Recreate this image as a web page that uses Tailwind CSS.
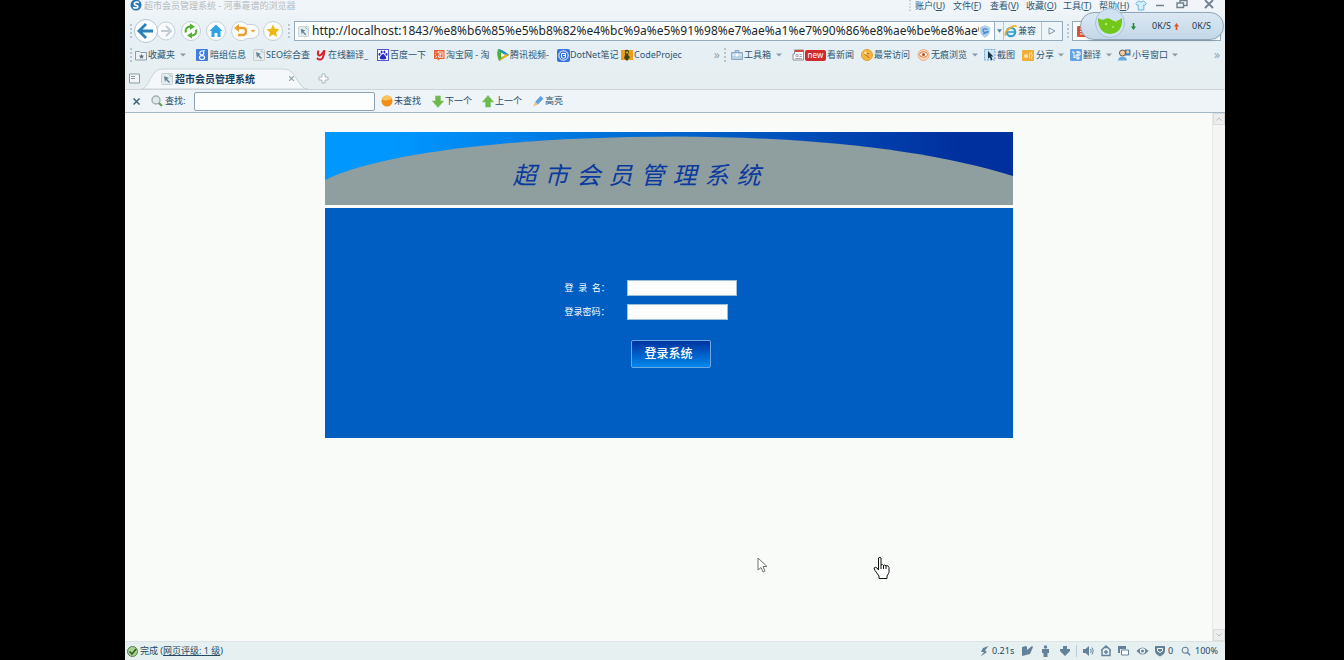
<!DOCTYPE html>
<html lang="zh-CN">
<head>
<meta charset="utf-8">
<title>超市会员管理系统</title>
<script src="https://cdn.jsdelivr.net/npm/@tailwindcss/browser@4"></script>
</head>
<body class="bg-black">
<svg class="hidden">
  <symbol id="page" viewBox="0 0 12 12"><rect x=".5" y=".5" width="11" height="11" rx="1" fill="#e6ecee" stroke="#c3ced3"/><path d="M3 3l5 2-2 1 3 3-1 1-3-3-1 2z" fill="#5f8496"/><path d="M8 1.500l2.500 2.500" stroke="#7fb58a"/></symbol>
  <symbol id="caret" viewBox="0 0 6 4"><path d="M0 .5h6L3 3.500z" fill="#8b9ba6"/></symbol>
  <symbol id="grip" viewBox="0 0 2 14"><path d="M1 0v14" stroke="#a9b8c2" stroke-width="1.500" stroke-dasharray="2 2"/></symbol>
  <symbol id="lens" viewBox="0 0 12 12"><circle cx="5" cy="5" r="3.600" fill="none" stroke="currentColor" stroke-width="1.300"/><path d="M8 8l3 3" stroke="currentColor" stroke-width="1.800"/></symbol>
</svg>
<div class="min-h-screen pl-[125px] pr-[119px] flex flex-col font-['Noto_Sans','Noto_Sans_CJK_SC',sans-serif] text-[9px] leading-3 text-[#2f5672] whitespace-nowrap">
<div class="relative flex-1 flex flex-col bg-[#f9fbf8] overflow-hidden">

<header class="bg-linear-to-b from-[#f2f6fa] from-0% via-[#e6f0f5] via-35% to-[#e7eced] to-100%">
  <div class="h-5 flex items-start px-1">
    <svg class="size-3 ml-px shrink-0" viewBox="0 0 12 12"><circle cx="6" cy="5" r="5.500" fill="#2876b4"/><path d="M9 2.500C5 1 2.500 4 6 5.200S8 9 3 7.500" fill="none" stroke="#fff" stroke-width="1.600"/></svg>
    <span class="ml-[2px] text-[#b3bcc2]">超市会员管理系统 - 河事靠谱的浏览器</span>
    <nav class="ml-auto flex items-start">
      <svg class="w-[2px] h-[11px] mr-1"><use href="#grip"/></svg>
      <button class="w-[38px] text-left">账户(<u>U</u>)</button>
      <button class="w-[37px] text-left">文件(<u>F</u>)</button>
      <button class="w-9 text-left">查看(<u>V</u>)</button>
      <button class="w-[37px] text-left">收藏(<u>O</u>)</button>
      <button class="w-9 text-left">工具(<u>T</u>)</button>
      <button class="w-9 text-left">帮助(<u>H</u>)</button>
      <button aria-label="皮肤" class="w-5"><svg class="w-3 h-[11px]" viewBox="0 0 12 11"><path d="M3.500 1L.7 3.500l1.500 2 1-.7V10h5.600V4.800l1 .7 1.500-2L8.500 1Q6 3 3.500 1z" fill="#d7effb" stroke="#6bb7e0"/></svg></button>
      <button aria-label="最小化" class="w-[21px]"><svg class="w-[10px] h-[11px]" viewBox="0 0 10 11"><path d="M1 5.500h8" stroke="#71818d" stroke-width="1.500"/></svg></button>
      <button aria-label="还原" class="w-7"><svg class="w-3 h-[9px]" viewBox="0 0 12 9"><path d="M4 3V.5h7v5H8M1 3h6.500v4.500H1z" fill="none" stroke="#71818d" stroke-width="1.400"/></svg></button>
      <button aria-label="关闭" class="w-[17px]"><svg class="size-[10px]" viewBox="0 0 10 10"><path d="M1 0l8 8M9 0L1 8" stroke="#71818d" stroke-width="1.800"/></svg></button>
    </nav>
  </div>

  <div class="h-[22px] flex items-center pl-[5px]">
    <svg class="w-[2px] h-[14px] shrink-0"><use href="#grip"/></svg>
    <button aria-label="后退" class="ml-px shrink-0"><svg class="w-11 h-[26px]" viewBox="0 0 44 26"><circle cx="33" cy="13" r="9" fill="#f7fafb" stroke="#c5d1d9"/><circle cx="13" cy="13" r="11.500" fill="#fafcfd" stroke="#b5c5cf"/><path d="M13 6l-7 7 7 7M6.500 13H20" fill="none" stroke="#2a7fb8" stroke-width="2.800"/><path d="M33 8l5 5-5 5M38 13H28" fill="none" stroke="#c2ccd3" stroke-width="1.800"/></svg></button>
    <button aria-label="刷新" class="ml-[3px] shrink-0"><svg class="size-[22px]" viewBox="0 0 22 22"><circle cx="11" cy="11" r="9.500" fill="#fafcfd" stroke="#c5d1d9"/><path d="M5.800 12.500Q5 6.800 10.500 6.300M16.200 9.500Q17 15.200 11.500 15.700" fill="none" stroke="#55b237" stroke-width="2.200"/><path d="M10 3.500l5 3.200-5 3zM12 12.300v6.200l-5-3z" fill="#55b237"/></svg></button>
    <button aria-label="主页" class="ml-[3px] shrink-0"><svg class="size-[22px]" viewBox="0 0 22 22"><circle cx="11" cy="11" r="9.500" fill="#fafcfd" stroke="#c5d1d9"/><path d="M11 4.500l6.500 6.500H15.500v6h-3v-4h-3v4h-3v-6H4.500z" fill="#2ca4e4"/></svg></button>
    <button aria-label="撤销" class="ml-[3px] shrink-0"><svg class="w-[30px] h-[22px]" viewBox="0 0 30 22"><path d="M11 1.500a9.500 9.500 0 1 0 6 17h5a7 7 0 0 0 0-14h-5q-3-3-6-3z" fill="#fafcfd" stroke="#c5d1d9"/><path d="M7 8h6q3 0 3 3.500T13 15H8" fill="none" stroke="#e9a12b" stroke-width="2.300"/><path d="M9 4v8L4 8z" fill="#e9a12b"/><path d="M20.500 10h5L23 12.500z" fill="#e9a12b"/></svg></button>
    <button aria-label="收藏" class="ml-[2px] shrink-0"><svg class="size-[22px]" viewBox="0 0 22 22"><circle cx="11" cy="11" r="9.500" fill="#fafcfd" stroke="#c5d1d9"/><path d="M11 4.500l1.900 4.200 4.600.5-3.400 3.100 1 4.600L11 14.600l-4.100 2.300 1-4.600L4.500 9.200l4.600-.5z" fill="#edb90f"/></svg></button>
    <svg class="ml-1 w-[2px] h-[14px] shrink-0"><use href="#grip"/></svg>
    <div class="ml-1 h-5 flex-1 min-w-0 flex items-center border border-[#93abbb] bg-[#fdfefe]">
      <svg class="size-[11px] ml-[3px] shrink-0"><use href="#page"/></svg>
      <input aria-label="地址" class="flex-1 min-w-0 pl-[3px] text-xs text-[#20272c] outline-none bg-transparent" value="http://localhost:1843/%e8%b6%85%e5%b8%82%e4%bc%9a%e5%91%98%e7%ae%a1%e7%90%86%e8%ae%be%e8%ae%">
      <svg class="w-3 h-[13px] mr-[3px] shrink-0" viewBox="0 0 12 13"><path d="M6 .5l5 2Q11.500 10 6 12.500.5 10 1 2.500z" fill="#a9cdee" stroke="#c3daee"/><path d="M8.500 4.500Q4 3 4 5.500t4 1.500-4 2" fill="none" stroke="#4c8cc9" stroke-width="1.300"/></svg>
      <button aria-label="历史" class="h-full w-[9px] border-l border-[#93abbb] bg-[#edf5f9] flex items-center justify-center shrink-0"><svg class="w-[5px] h-1" viewBox="0 0 6 4"><path d="M0 0h6L3 4z" fill="#4e83a5"/></svg></button>
      <button class="h-full w-[38px] border-l border-[#b3c5d0] bg-[#edf5f9] flex items-center shrink-0 gap-px"><svg class="size-[13px]" viewBox="0 0 13 13"><circle cx="7" cy="7" r="4.200" fill="#e3f4fb" stroke="#34a0d2" stroke-width="2.200"/><path d="M4 7h7" stroke="#34a0d2" stroke-width="1.600"/><path d="M1.500 11Q0 7 6 3t6-1" fill="none" stroke="#f0b21f" stroke-width="1.700"/></svg>兼容</button>
      <button aria-label="转到" class="h-full w-[21px] border-l border-[#b3c5d0] bg-[#edf5f9] flex items-center justify-center shrink-0"><svg class="size-2" viewBox="0 0 8 8"><path d="M1 .8L7 4 1 7.200z" fill="none" stroke="#8499a7"/></svg></button>
    </div>
    <svg class="ml-1 w-[2px] h-[14px] shrink-0"><use href="#grip"/></svg>
    <div class="ml-[3px] mr-1 w-[149px] h-5 border border-[#93abbb] bg-white flex items-center shrink-0">
      <svg class="size-[11px] ml-1" viewBox="0 0 11 11"><rect width="11" height="11" rx="1" fill="#dd5238"/><path d="M3 3h6M3 5.500h6M3 8h6" stroke="#fff"/></svg>
      <input aria-label="搜索" class="flex-1 min-w-0 outline-none">
    </div>
  </div>

  <nav class="h-[26px] flex items-center pl-[5px]">
    <svg class="w-[2px] h-[14px] shrink-0"><use href="#grip"/></svg>
    <button class="ml-[3px] w-[61px] flex items-center gap-px shrink-0"><svg class="w-3 h-[11px]" viewBox="0 0 12 11"><path d="M.5 10V1.500h4l1 1h6V10z" fill="#eef2f4" stroke="#8b9aa4"/><path d="M6.500 4l.8 1.600 1.700.2-1.200 1.200.3 1.700-1.600-.9-1.600.9.3-1.700L4 5.800l1.700-.2z" fill="#5e7180"/></svg>收藏夹<svg class="ml-1 w-[6px] h-1"><use href="#caret"/></svg></button>
    <a href="#" class="w-[57px] flex items-center gap-[2px] shrink-0"><svg class="size-3" viewBox="0 0 12 12"><rect width="12" height="12" rx="1" fill="#3f7ce0"/><circle cx="5.800" cy="4" r="2" fill="none" stroke="#fff" stroke-width="1.200"/><ellipse cx="6" cy="8.600" rx="2.600" ry="1.900" fill="none" stroke="#fff" stroke-width="1.200"/><path d="M7 1.800h2" stroke="#fff"/></svg>暗组信息</a>
    <a href="#" class="w-[63px] flex items-center gap-px shrink-0"><svg class="size-3"><use href="#page"/></svg>SEO综合查</a>
    <a href="#" class="w-[61px] flex items-center gap-[2px] shrink-0"><svg class="w-[10px] h-3" viewBox="0 0 10 12"><path d="M2.500 1.500Q1 6 3 6.500T8 2M8.500 1Q7.500 11 4 10.500T2 9" fill="none" stroke="#d8202c" stroke-width="2"/></svg>在线翻译_</a>
    <a href="#" class="w-14 flex items-center gap-px shrink-0"><svg class="size-3" viewBox="0 0 12 12"><rect x=".5" y=".5" width="11" height="11" fill="#fff" stroke="#5456d8"/><g fill="#2628c9"><ellipse cx="4.600" cy="3" rx="1" ry="1.500"/><ellipse cx="7.400" cy="3" rx="1" ry="1.500"/><ellipse cx="2.500" cy="5.400" rx="1" ry="1.300"/><ellipse cx="9.500" cy="5.400" rx="1" ry="1.300"/><path d="M6 5q1.500 0 2 1.800 2 1.500 1 3Q7.500 10.700 6 10.200q-1.500.5-3-.4-1-1.500 1-3Q4.500 5 6 5z"/></g></svg>百度一下</a>
    <a href="#" class="w-16 flex items-center gap-px shrink-0"><svg class="size-3" viewBox="0 0 12 12"><path d="M1 1h10.500v9H7L5 11.500 4.500 10H1z" fill="#ea6336"/><path d="M2.500 3l1 .8M2 5.500l1 .5M2.500 9l1.300-2M5.500 2L4.800 4M5 3h5v5.500H9M5.500 5h3.500M7.200 4v4M5.500 6.500v1.800h3.200" fill="none" stroke="#fff" stroke-width=".8"/></svg>淘宝网 - 淘</a>
    <a href="#" class="w-[60px] flex items-center gap-px shrink-0"><svg class="size-3" viewBox="0 0 12 12"><path d="M1 0Q5 0 12 6L2 12Q-1 6 1 0z" fill="#4bb233"/><path d="M1 0Q6 1 12 6L8 7z" fill="#1e90d8"/><path d="M2 12l10-6-4-1z" fill="#f1a51c"/><path d="M4 3.500L8 6 4 8.500z" fill="#fff"/></svg>腾讯视频-</a>
    <a href="#" class="w-16 flex items-center shrink-0"><svg class="size-[13px]" viewBox="0 0 13 13"><rect width="13" height="13" rx="2" fill="#3575dc"/><circle cx="6.500" cy="6.500" r="4.700" fill="none" stroke="#fff"/><path d="M4.500 4.500h4v4q-2 1.500-4 0zM6 6.500h2.500" fill="none" stroke="#fff"/></svg>DotNet笔记</a>
    <a href="#" class="flex items-center gap-px shrink-0"><svg class="size-3" viewBox="0 0 12 12"><rect y="1" width="12" height="10" fill="#f29c1b"/><path d="M4 1q4-1 4 2l-1 3 2 2-3 4-3-3 1-3z" fill="#3a4a1d"/><circle cx="6" cy="3.500" r="1.200" fill="#9dbb36"/></svg>CodeProjec</a>
    <span class="ml-auto text-[#93a3ad] text-xs">»</span>
    <svg class="ml-1 w-[2px] h-[14px] shrink-0"><use href="#grip"/></svg>
    <button class="ml-[5px] w-[61px] flex items-center gap-px shrink-0"><svg class="size-3" viewBox="0 0 12 12"><path d="M4 3V1.500h4V3M.5 3.500h11v7H.5z" fill="#b7d0e4" stroke="#8caac4"/><path d="M1 6h10M5 5h2v2H5z" fill="#fff" stroke="#f4fafd" stroke-width=".8"/></svg>工具箱<svg class="ml-1 w-[6px] h-1"><use href="#caret"/></svg></button>
    <a href="#" class="w-[69px] flex items-center gap-px shrink-0"><svg class="size-3" viewBox="0 0 12 12"><path d="M2.500 1h9v10H1V5h1.500z" fill="#fff" stroke="#8b8f94"/><path d="M3 1h8.500v2H3z" fill="#d4473c"/><path d="M4 5.500h2v2H4zM7.500 5.500H10M7.500 7.500H10M3 9.500h7" stroke="#a3a9ae" fill="none"/></svg><span class="h-[11px] w-[21px] rounded-xs bg-[#cf2b2b] text-white text-[8px] leading-[10px] text-center">new</span>看新闻</a>
    <a href="#" class="w-14 flex items-center gap-px shrink-0"><svg class="size-3" viewBox="0 0 12 12"><circle cx="6" cy="6" r="5.500" fill="#f3b63c" stroke="#e0a13b"/><path d="M3 5l3 1.500L8 9M4 3.500L8 5" stroke="#b36b14" fill="none"/><circle cx="4.500" cy="4" r="1.500" fill="#fbe39b"/></svg>最常访问</a>
    <button class="w-[67px] flex items-center gap-px shrink-0"><svg class="w-[13px] h-3" viewBox="0 0 13 12"><circle cx="6.500" cy="6" r="5.500" fill="#f9d9bd" stroke="#eeaf85"/><ellipse cx="6.500" cy="5.500" rx="4" ry="2.700" fill="#fff" stroke="#d7793b"/><circle cx="6.500" cy="5.500" r="1.600" fill="#c0551c"/></svg>无痕浏览<svg class="ml-1 w-[6px] h-1"><use href="#caret"/></svg></button>
    <button class="w-[38px] flex items-center gap-px shrink-0"><svg class="size-3" viewBox="0 0 12 12"><rect x=".5" y=".5" width="10.500" height="10.500" fill="#cfe4f3" stroke="#6fa5d0" stroke-dasharray="2 1"/><path d="M4 2l5.500 5.500H7.200l1.300 3-1.500.7-1.300-3L4 9.700z" fill="#17334c"/></svg>截图</button>
    <button class="w-12 flex items-center gap-[2px] shrink-0"><svg class="size-3" viewBox="0 0 12 12"><rect y="1" width="12" height="11" rx="1" fill="#f1ae37"/><circle cx="4" cy="7" r="2" fill="#fbe4ae"/><path d="M7 4q2 2.500 0 5M9 3q2.500 3.500 0 7" fill="none" stroke="#fbe4ae"/></svg>分享<svg class="ml-[2px] w-[6px] h-1"><use href="#caret"/></svg></button>
    <button class="w-12 flex items-center gap-px shrink-0"><svg class="size-3" viewBox="0 0 12 12"><rect width="12" height="12" rx="1" fill="#62a4e2"/><path d="M2 3h2v6l1-1M6 3h4v3H6v3h4M8 2v9" fill="none" stroke="#fff"/></svg>翻译<svg class="ml-1 w-[6px] h-1"><use href="#caret"/></svg></button>
    <button class="w-[60px] flex items-center gap-px shrink-0"><svg class="w-[13px] h-3" viewBox="0 0 13 12"><rect x="7" y=".5" width="5.500" height="6" fill="#4a80b8"/><circle cx="9.700" cy="3" r="1.500" fill="#f2cfa8"/><circle cx="4.500" cy="4" r="3" fill="#f2cfa8" stroke="#69523e"/><path d="M0 11.500q.5-4 4.500-4t4.500 4z" fill="#69abe0"/></svg>小号窗口<svg class="ml-[3px] w-[6px] h-1"><use href="#caret"/></svg></button>
    <span class="ml-9 mr-[5px] text-[#93a3ad] text-xs">»</span>
  </nav>

  <div class="h-[21px] flex items-center">
    <button aria-label="标签列表" class="ml-1 shrink-0"><svg class="w-[11px] h-[11px]" viewBox="0 0 11 11"><path d="M.5 1h10v9H.5zM2 3.500h4M2 5.500h4" fill="#f0f4f6" stroke="#8b9ca8"/></svg></button>
    <div class="relative ml-px w-[167px] h-full shrink-0">
      <svg class="w-full h-full" viewBox="0 0 167 21" preserveAspectRatio="none"><path d="M0 21C9 21 9 1 21 1h122c13 0 13 20 24 20z" fill="#f5f8fa" stroke="#c9d3d8"/></svg>
      <div class="absolute inset-0 pl-5 pr-3 flex items-center text-[10px] font-bold text-[#173f5e]"><svg class="size-3 mr-[2px]"><use href="#page"/></svg>超市会员管理系统<button aria-label="关闭标签" class="ml-auto mr-0.5"><svg class="size-[5px]" viewBox="0 0 5 5"><path d="M0 0l5 5M5 0L0 5" stroke="#8da0ac" stroke-width="1.200"/></svg></button></div>
    </div>
    <button aria-label="新建标签" class="ml-[10px]"><svg class="size-[11px]" viewBox="0 0 11 11"><path d="M4 1h3v3h3v3H7v3H4V7H1V4h3z" fill="#fff" stroke="#a7b8c3"/></svg></button>
  </div>

  <form class="h-6 flex items-center border-b border-[#a5b8c6] border-t border-t-[#cdd6db] bg-[#eff4f8] pl-2 text-[#264a66]">
    <button type="button" aria-label="关闭查找" class="w-[18px]"><svg class="size-[7px]" viewBox="0 0 7 7"><path d="M.5.5l6 6M6.500.5l-6 6" stroke="#3b647f" stroke-width="1.500"/></svg></button>
    <label for="find" class="w-[43px] flex items-center gap-[2px]"><svg class="size-3" viewBox="0 0 12 12"><circle cx="5" cy="5" r="4" fill="#dfe9ec" stroke="#a2b0b5" stroke-width="1.400"/><path d="M8 8l3 3" stroke="#6ba14d" stroke-width="2.200"/></svg>查找:</label>
    <input id="find" class="w-[181px] h-[19px] rounded-xs border border-[#8fa2b0] bg-[#fcfefe] px-1 outline-none">
    <button type="button" class="ml-[6px] w-[51px] flex items-center gap-px"><svg class="size-3" viewBox="0 0 12 12"><circle cx="6" cy="6" r="5.500" fill="#f08e17"/><path d="M1 4.500q4 2 10-.5Q9.500.5 6 .5T1 4.500z" fill="#fbc659"/></svg>未查找</button>
    <button type="button" class="w-[50px] flex items-center gap-px"><svg class="w-3 h-[13px]" viewBox="0 0 12 13"><path d="M3.500 1h5v5h3.200L6 12.500.3 6h3.200z" fill="#6cba4b" stroke="#8bc770" stroke-width=".7"/></svg>下一个</button>
    <button type="button" class="w-[50px] flex items-center gap-px"><svg class="w-3 h-[13px]" viewBox="0 0 12 13"><path d="M3.500 12h5V7h3.200L6 .5.3 7h3.200z" fill="#6cba4b" stroke="#8bc770" stroke-width=".7"/></svg>上一个</button>
    <button type="button" class="flex items-center gap-px"><svg class="size-3" viewBox="0 0 12 12"><path d="M3 7l5.500-6 3 2.500L6 9.500z" fill="#5ba2df"/><path d="M3 7l3 2.500L1 11.500z" fill="#efc67c"/></svg>高亮</button>
  </form>
</header>

<div class="flex-1 flex">
  <main class="flex-1 pt-[19px]">
    <div class="mx-auto max-w-[688px]">
      <div class="relative h-[73px]">
        <svg class="block w-full h-full" viewBox="0 0 688 73" preserveAspectRatio="none"><defs><linearGradient id="sky"><stop offset=".1" stop-color="#0097ff"/><stop offset=".5" stop-color="#0066cf"/><stop offset=".92" stop-color="#00309e"/></linearGradient></defs><path d="M0 0h688v73H0z" fill="url(#sky)"/><path d="M0 48C40 28 150 5 350 4.500C500 5 610 20 688 44V73H0z" fill="#8f9e9e"/></svg>
        <h1 class="absolute inset-x-0 top-[25px] flex justify-center gap-2 pr-16 text-2xl leading-9 italic text-[#0a3a9e]"><span>超</span><span>市</span><span>会</span><span>员</span><span>管</span><span>理</span><span>系</span><span>统</span></h1>
      </div>
      <form class="mt-[3px] h-[230px] bg-[#005dc1] pt-[72px] pl-[240px] text-white">
        <div class="flex items-center h-4"><label for="user" class="w-[62px]">登&nbsp; 录&nbsp; 名：</label><input id="user" class="w-[110px] h-4 bg-[#fcfdfc] border border-[#9cc0e0] px-1 text-black outline-none"></div>
        <div class="mt-2 flex items-center h-4"><label for="pass" class="w-[62px]">登录密码：</label><input id="pass" type="password" class="w-[101px] h-4 bg-[#fcfdfc] border border-[#9cc0e0] px-1 text-black outline-none"></div>
        <button type="button" class="mt-5 ml-[66px] pr-1 w-20 h-7 rounded-xs border border-[#6fa8e4] bg-linear-to-b from-[#0233a0] to-[#0088ee] text-xs font-medium">登录系统</button>
      </form>
    </div>
  </main>
  <div class="w-[13px] flex flex-col justify-between bg-[#f5f6f4] border-l border-[#e7e9e8]">
    <div class="h-3 bg-[#eceded] border border-[#dadcdb] flex items-center justify-center"><svg class="w-[6px] h-1" viewBox="0 0 6 4"><path d="M.5 3.500L3 1l2.500 2.500" fill="none" stroke="#b9bdbd"/></svg></div>
    <div class="h-3 bg-[#eceded] border border-[#dadcdb] flex items-center justify-center"><svg class="w-[6px] h-1" viewBox="0 0 6 4"><path d="M.5.5L3 3 5.500.5" fill="none" stroke="#b9bdbd"/></svg></div>
  </div>
</div>

<footer class="h-[19px] flex items-center border-t border-[#dbe3e6] bg-[#e7f0f0] pl-[2px] pr-[7px] text-[#264a66]">
  <svg class="size-[11px] mr-[2px]" viewBox="0 0 11 11"><circle cx="5.500" cy="5.500" r="5" fill="#a9d391" stroke="#57804d"/><path d="M2.500 5.500L5 8l4-5" fill="none" stroke="#335f2c" stroke-width="1.600"/></svg>
  <span>完成 (<a href="#" class="underline">网页评级: 1 级</a>)</span>
  <div class="ml-auto flex items-center text-[#64819a]">
    <svg class="w-[9px] h-[11px] mr-[3px]" viewBox="0 0 9 11"><path d="M8.500 0L3 2 1 6h3L.5 10.500 7 6 5 4.500z" fill="currentColor"/></svg>
    <span class="w-[30px] text-[#264a66]">0.21s</span>
    <svg class="w-[11px] h-3 mr-2" viewBox="0 0 11 12"><path d="M0 2l4-1 1 1v3l5-4 1 1-3 7-8 2z" fill="currentColor"/></svg>
    <svg class="w-[9px] h-3 mr-[10px]" viewBox="0 0 9 12"><circle cx="4.500" cy="2" r="1.700" fill="currentColor"/><path d="M1 4h7v4H6.500v4h-4V8H1z" fill="currentColor"/></svg>
    <svg class="w-[10px] h-3" viewBox="0 0 10 12"><path d="M3 1h4v3h3v2l-5 5-5-5V4h3z" fill="currentColor"/></svg>
    <span class="mx-[6px] w-px h-3 bg-[#bccad1]"></span>
    <svg class="w-[11px] h-3 mr-[7px]" viewBox="0 0 11 12"><path d="M0 4h2.500L6 1v10L2.500 8H0z" fill="currentColor"/><path d="M7.500 4q1.500 2 0 4M9 2.500q2.500 3.500 0 7" fill="none" stroke="currentColor"/></svg>
    <svg class="w-[10px] h-3 mr-[7px]" viewBox="0 0 10 12"><path d="M5 1l4.500 4H9v5.500H1V5H.5zM3.500 2.500h3" fill="none" stroke="currentColor" stroke-width="1.400"/><path d="M5 5v4M3 7h4" stroke="currentColor" stroke-width="1.400"/></svg>
    <svg class="w-[11px] h-3 mr-[7px]" viewBox="0 0 11 12"><path d="M0 1h8v3H2v4H0z" fill="currentColor"/><path d="M3.500 5h7v5h-7z" fill="#fff" stroke="currentColor"/></svg>
    <svg class="w-[13px] h-3 mr-[6px]" viewBox="0 0 13 12"><path d="M.5 6Q6.500-1 12.500 6 6.500 13 .5 6z" fill="currentColor"/><circle cx="6.500" cy="6" r="2.700" fill="#fff"/><circle cx="6.500" cy="6" r="1.500" fill="currentColor"/></svg>
    <svg class="w-[10px] h-3 mr-[3px]" viewBox="0 0 10 12"><path d="M0 1h10v5q0 3-5 5.500Q0 9 0 6z" fill="currentColor"/><path d="M2.500 3.500h5v2.500q-2.500 3-5 0z" fill="none" stroke="#fff"/></svg>
    <span class="w-[13px] text-[#264a66]">0</span>
    <svg class="size-[10px] mr-[4px]"><use href="#lens" width="10" height="10"/></svg>
    <span class="text-[#264a66]">100%</span>
  </div>
</footer>

<aside class="absolute right-px top-3 w-36 h-7 rounded-full border border-[#8fa5b8] bg-linear-to-b from-[#dbe8f3] to-[#c3d7e8] shadow-sm flex items-center pl-[50px] text-[#23394b]">
  <svg class="absolute left-[13px] -top-[6px] size-8" viewBox="0 0 32 32"><circle cx="16" cy="16" r="14.500" fill="#cfe2f1" stroke="#a9c3d8"/><path d="M4 11q4 3 7 1t7 1 10-2q1 15-12 16Q4 26 4 11z" fill="#71c81a"/><circle cx="12" cy="17" r="1.200" fill="#b9ea72"/><circle cx="19" cy="20" r="1" fill="#b9ea72"/><circle cx="22" cy="14" r="1" fill="#b9ea72"/></svg>
  <svg class="w-[5px] h-[7px]" viewBox="0 0 5 7"><path d="M1.700 0h1.600v3.500H5L2.500 7 0 3.500h1.700z" fill="#1d8a2c"/></svg>
  <span class="ml-4">0K/S</span>
  <svg class="ml-[3px] w-[5px] h-[7px]" viewBox="0 0 5 7"><path d="M1.700 7h1.600V3.500H5L2.500 0 0 3.500h1.700z" fill="#e2551d"/></svg>
  <span class="ml-[13px]">0K/S</span>
</aside>

<svg class="absolute left-[632px] top-[557px] w-[11px] h-4" viewBox="0 0 11 16"><path d="M1 1v12l3-2.500 2 4.500 2-1-2-4.500h4z" fill="#fff" stroke="#6d7271"/></svg>
<svg class="absolute left-[748px] top-[556px] w-[18px] h-6" viewBox="0 0 18 24"><path d="M5.500 2q1.500-1.500 2.500 0v7q1.500-1.500 2.500.5 1.500-1.500 2.500.5 2-1.500 3 1.500v5l-2 3.500v2.500H6v-2.500L2 14.500 1 12q1.500-1.500 3 0l1.500 2z" fill="#fff" stroke="#111"/><path d="M8 9v4M10.500 9.500V13M13 10v3" stroke="#111"/></svg>
</div>
</div>
</body>
</html>
